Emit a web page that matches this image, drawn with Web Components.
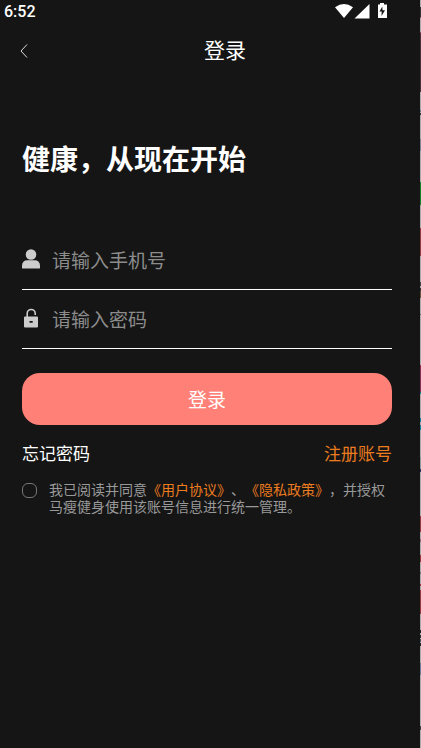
<!DOCTYPE html>
<html lang="zh-CN">
<head>
<meta charset="utf-8">
<meta name="viewport" content="width=device-width, initial-scale=1">
<title>登录</title>
<style>
  html { background: #151515; }
  body { margin: 0; font-family: Roboto, "Noto Sans CJK SC", sans-serif; color: #fff; text-spacing-trim: space-all; }
</style>
</head>
<body>
<login-screen></login-screen>
<script>
function define(name, html, setup) {
  const template = document.createElement('template');
  template.innerHTML = html;
  customElements.define(name, class extends HTMLElement {
    constructor() {
      super();
      this.attachShadow({ mode: 'open' }).append(template.content.cloneNode(true));
    }
    connectedCallback() { if (setup) setup(this, this.shadowRoot); }
  });
}

define('status-bar', `
<style>
  :host { display: flex; justify-content: space-between; align-items: center; height: 24px; padding: 0 32px 0 4px; font: 500 16px/24px Roboto, sans-serif; }
  .icons { display: flex; }
  svg { display: block; fill: #fff; }
</style>
<span>6:52</span>
<span class="icons">
  <svg width="54" height="24" viewBox="0 0 54 24" aria-hidden="true">
    <path d="M1 7.300Q10 .6 19 7.300L10 18Z"/>
    <path d="M35.500 4V18.500H20.500Z"/>
    <path fill-rule="evenodd" d="M44 4.500H46V3H50V4.500H53V18H44ZM48.300 6.500 45.500 11.500H47.700L47.500 16 51 10.300H48.500Z"/>
  </svg>
</span>`);

define('nav-header', `
<style>
  :host { display: flex; align-items: center; height: 54px; }
  button { display: flex; justify-content: flex-end; width: 30px; height: 44px; align-items: center; border: 0; padding: 0 2px 0 0; background: none; }
  svg { fill: none; stroke: #ddd; stroke-width: 1; }
  h1 { flex: 1; margin: 0; text-align: center; font-size: 21px; line-height: 32px; font-weight: 400; }
</style>
<button type="button" aria-label="返回"><svg width="8" height="14" viewBox="0 0 8 14"><path d="M7 .5 1 7 7 13.500"/></svg></button>
<h1><slot></slot></h1>`);

define('text-field', `
<style>
  :host { display: block; }
  label { display: flex; align-items: center; gap: 12px; height: 56px; padding-bottom: 2px; border-bottom: 1px solid #fff; }
  svg { flex: none; fill: #ccc; }
  input { flex: 1; min-width: 0; height: 40px; padding: 0; border: 0; outline: 0; background: none; color: #fff; font: 400 19px/28px "Noto Sans CJK SC", sans-serif; }
  input::placeholder { color: #8c8c8c; opacity: 1; }
  :host([kind=phone]) .lock, :host([kind=password]) .user { display: none; }
</style>
<label>
  <svg class="user" width="18" height="20" viewBox="0 0 18 20"><circle cx="9" cy="5.500" r="5.300"/><path d="M0 19V17Q0 11.300 5.500 11.300H12.500Q18 11.300 18 17V19Q18 19.500 17 19.500H1Q0 19.500 0 19Z"/></svg>
  <svg class="lock" width="18" height="20" viewBox="0 0 18 20"><path d="M5.200 9V5.500A4 4 0 0 1 13.200 5.500V7" fill="none" stroke="#ccc" stroke-width="1.600"/><path fill-rule="evenodd" d="M3 8.500H15Q16 8.500 16 9.500V18.500Q16 19.500 15 19.500H3Q2 19.500 2 18.500V9.500Q2 8.500 3 8.500ZM7.500 13V14.800H10.700V13Z"/></svg>
  <input>
</label>`, (host, root) => {
  const input = root.querySelector('input');
  input.type = host.getAttribute('kind') === 'password' ? 'password' : 'tel';
  input.placeholder = host.getAttribute('hint');
  input.setAttribute('aria-label', input.placeholder);
});

define('primary-button', `
<style>
  :host { display: block; }
  button { display: block; width: 100%; height: 52px; border: 0; border-radius: 18px; padding: 0; background: #ff8077; color: #fff; font: 400 19px/28px "Noto Sans CJK SC", sans-serif; }
</style>
<button type="button"><slot></slot></button>`);

define('account-links', `
<style>
  :host { display: flex; justify-content: space-between; font-size: 17px; line-height: 24px; }
  a { color: #fff; text-decoration: none; }
  a + a { color: #ec7c20; }
</style>
<a href="#forgot">忘记密码</a><a href="#register">注册账号</a>`);

define('consent-check', `
<style>
  :host { display: flex; gap: 12px; align-items: flex-start; font-size: 14px; line-height: 17px; color: #999; }
  input { flex: none; appearance: none; width: 15px; height: 15px; margin: 1px 0 0; border: 1px solid #777; border-radius: 6px; }
  input:checked { background: #ec7c20; }
  a { color: #ec7c20; text-decoration: none; }
</style>
<input type="checkbox" id="agree">
<label for="agree">我已阅读并同意<a href="#terms">《用户协议》</a>、<a href="#privacy">《隐私政策》</a>，并授权<span>马瘦健身使用该账号信息进行统一管理。</span></label>`);

/* Sliver of the page behind, visible along the right edge. */
define('edge-strip', `
<style>
  :host { display: block; width: 1px; background: #aaa; }
  svg { display: block; width: 1px; height: 100%; }
</style>
<svg viewBox="0 0 1 748" preserveAspectRatio="none" aria-hidden="true"></svg>`, (host, root) => {
  const bands = [[7,10,'#333'],[17,1,'#a04050'],[32,1,'#a04050'],[33,59,'#4a303c'],[110,2,'#678'],[113,2,'#334'],[139,12,'#7c8396'],[182,23,'#16802a'],[228,28,'#93383c'],[282,4,'#444'],[288,3,'#333'],[291,7,'#6b5335'],[314,1,'#666'],[365,27,'#8b2e55'],[392,2,'#168098'],[418,4,'#168098'],[425,5,'#168098'],[457,12,'#8a9a9a'],[469,3,'#223060'],[516,16,'#93383c'],[539,3,'#93686b'],[555,7,'#93383c'],[572,2,'#777'],[584,2,'#93383c'],[590,24,'#93383c'],[630,3,'#222'],[635,3,'#333'],[639,3,'#456'],[643,3,'#222'],[663,12,'#6c7d94'],[726,4,'#444']];
  root.querySelector('svg').innerHTML = bands.map(([y, h, c]) => `<rect y="${y}" width="1" height="${h}" fill="${c}"/>`).join('');
});

define('login-screen', `
<style>
  :host { display: flex; min-height: 100vh; background: #151515; }
  .page { flex: 1; min-width: 0; }
  main { padding: 60px 28px 24px 22px; }
  h2 { margin: 0 0 47px; font-size: 28px; line-height: 46px; font-weight: 700; }
  primary-button { margin-top: 24px; }
  account-links { margin-top: 17px; }
  consent-check { margin-top: 16px; }
</style>
<div class="page">
  <status-bar></status-bar>
  <nav-header>登录</nav-header>
  <main>
    <h2>健康，从现在开始</h2>
    <text-field kind="phone" hint="请输入手机号"></text-field>
    <text-field kind="password" hint="请输入密码"></text-field>
    <primary-button>登录</primary-button>
    <account-links></account-links>
    <consent-check></consent-check>
  </main>
</div>
<edge-strip></edge-strip>`);
</script>
</body>
</html>
